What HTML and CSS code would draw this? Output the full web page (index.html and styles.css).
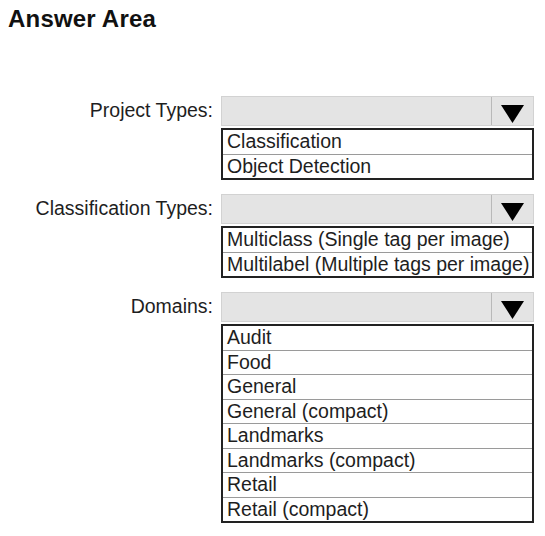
FILE: index.html
```html
<!DOCTYPE html>
<html lang="en">
<head>
    <meta charset="UTF-8">
    <meta name="viewport" content="width=device-width, initial-scale=1.0">
    <title>Answer Area</title>
    <link rel="stylesheet" href="styles.css">
</head>
<body>
    <h1 class="title">Answer Area</h1>

    <div class="answers">
        <div class="field">
            <span class="label">Project Types:</span>
            <div class="picker">
                <div class="select">
                    <span class="value"></span>
                    <span class="arrow">
                        <svg width="23" height="18" viewBox="0 0 23 18"><polygon points="0,0 23,0 11.5,18" fill="#000"/></svg>
                    </span>
                </div>
                <ul class="options">
                    <li>Classification</li>
                    <li>Object Detection</li>
                </ul>
            </div>
        </div>

        <div class="field">
            <span class="label">Classification Types:</span>
            <div class="picker">
                <div class="select">
                    <span class="value"></span>
                    <span class="arrow">
                        <svg width="23" height="18" viewBox="0 0 23 18"><polygon points="0,0 23,0 11.5,18" fill="#000"/></svg>
                    </span>
                </div>
                <ul class="options">
                    <li>Multiclass (Single tag per image)</li>
                    <li>Multilabel (Multiple tags per image)</li>
                </ul>
            </div>
        </div>

        <div class="field">
            <span class="label">Domains:</span>
            <div class="picker">
                <div class="select">
                    <span class="value"></span>
                    <span class="arrow">
                        <svg width="23" height="18" viewBox="0 0 23 18"><polygon points="0,0 23,0 11.5,18" fill="#000"/></svg>
                    </span>
                </div>
                <ul class="options">
                    <li>Audit</li>
                    <li>Food</li>
                    <li>General</li>
                    <li>General (compact)</li>
                    <li>Landmarks</li>
                    <li>Landmarks (compact)</li>
                    <li>Retail</li>
                    <li>Retail (compact)</li>
                </ul>
            </div>
        </div>
    </div>
</body>
</html>
```

FILE: styles.css
```css
body {
    margin: 0;
    font-family: "Liberation Sans", Arial, sans-serif;
    color: #1e1e1e;
    background: #fff;
}

.title {
    margin: 5px 0 0 8px;
    font-size: 24px;
    line-height: 28px;
    letter-spacing: 0.2px;
    font-weight: bold;
    color: #111;
}

.answers {
    display: flex;
    flex-direction: column;
    gap: 14px;
    margin-top: 63px;
}

.field {
    display: grid;
    grid-template-columns: 213px 313px;
    column-gap: 8px;
    align-items: start;
}

.label {
    text-align: right;
    font-size: 19.5px;
    line-height: 28px;
}

.select {
    display: flex;
    height: 30px;
    box-sizing: border-box;
    border: 1px solid #d2d2d2;
    background: #e4e4e4;
}

.value {
    flex: 1;
}

.arrow {
    width: 41px;
    border-left: 1px solid #b9b9b9;
    display: flex;
    justify-content: center;
    align-items: flex-end;
    padding-bottom: 2px;
}

.arrow svg {
    display: block;
}

.options {
    list-style: none;
    margin: 2px 0 0;
    padding: 0;
    border: 2px solid #222;
    font-size: 19.5px;
}

.options li {
    line-height: 23.5px;
    padding-left: 4px;
    border-bottom: 1px solid #9a9a9a;
    white-space: nowrap;
}

.options li:last-child {
    border-bottom: none;
}
```
